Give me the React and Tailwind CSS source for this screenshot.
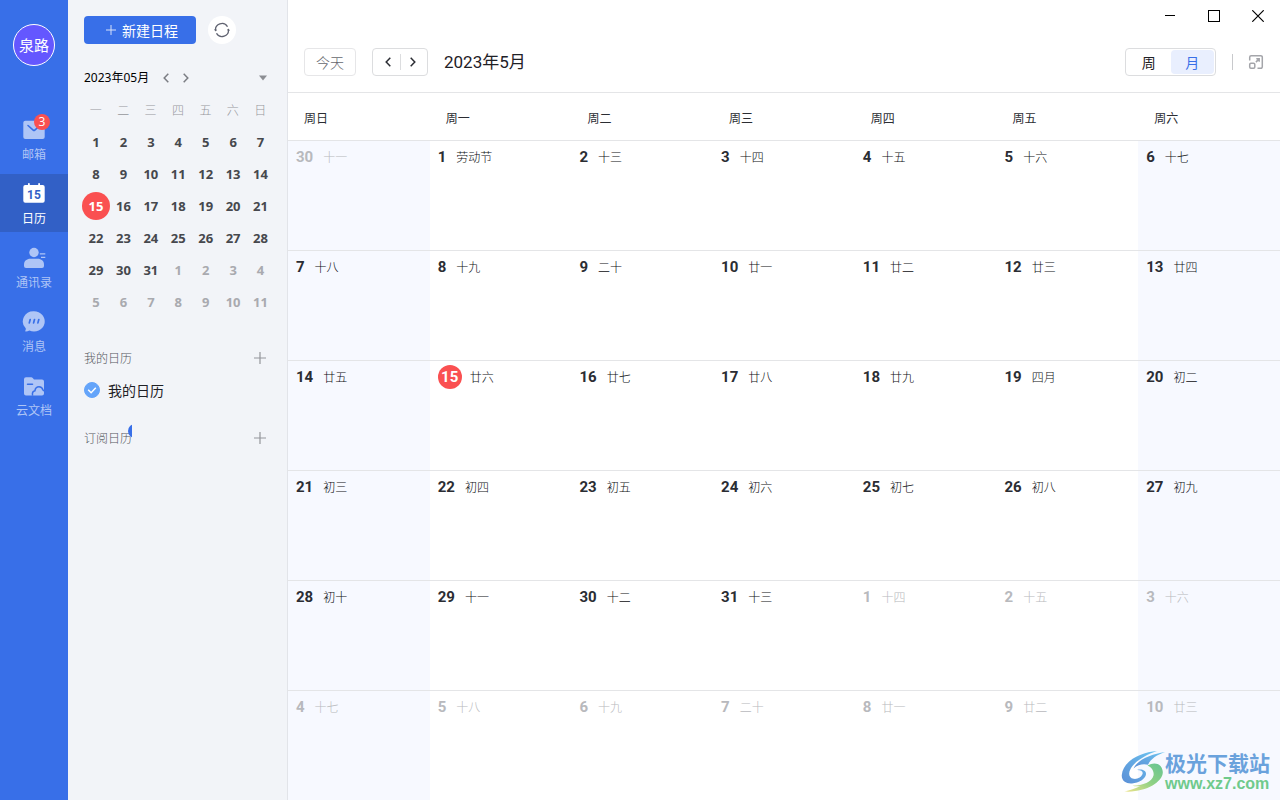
import { useState } from 'react'
import clsx from 'clsx'

const WEEKDAYS = ['周日', '周一', '周二', '周三', '周四', '周五', '周六']
const MINI_WEEKDAYS = ['一', '二', '三', '四', '五', '六', '日']

// [day, lunar label]
const MONTH = [
  [[30, '十一'], [1, '劳动节'], [2, '十三'], [3, '十四'], [4, '十五'], [5, '十六'], [6, '十七']],
  [[7, '十八'], [8, '十九'], [9, '二十'], [10, '廿一'], [11, '廿二'], [12, '廿三'], [13, '廿四']],
  [[14, '廿五'], [15, '廿六'], [16, '廿七'], [17, '廿八'], [18, '廿九'], [19, '四月'], [20, '初二']],
  [[21, '初三'], [22, '初四'], [23, '初五'], [24, '初六'], [25, '初七'], [26, '初八'], [27, '初九']],
  [[28, '初十'], [29, '十一'], [30, '十二'], [31, '十三'], [1, '十四'], [2, '十五'], [3, '十六']],
  [[4, '十七'], [5, '十八'], [6, '十九'], [7, '二十'], [8, '廿一'], [9, '廿二'], [10, '廿三']],
]

const TODAY = 15

// Days of another month: big ones in the first week, small ones in the last two
function isOutside(week, day) {
  return (week === 0 && day > 20) || (week > 3 && day < 15)
}

function MailIcon() {
  return (
    <svg className="size-6" viewBox="0 0 24 24" fill="none">
      <rect x="1.3" y="2.8" width="21.4" height="18.2" rx="2" fill="currentColor" />
      <path d="M6 7.500l5.200 4.600a1.200 1.200 0 0 0 1.600 0L18 7.500" stroke="#386fe8" strokeWidth="1.600" strokeLinecap="round" />
    </svg>
  )
}

function CalendarIcon() {
  return (
    <svg className="size-6" viewBox="0 0 24 24">
      <path
        d="M3.300 3H6V1.800a.9.9 0 0 1 1.800 0V3h8.400V1.800a.9.9 0 0 1 1.800 0V3h2.700a2 2 0 0 1 2 2v13.700a2 2 0 0 1-2 2H3.300a2 2 0 0 1-2-2V5a2 2 0 0 1 2-2z"
        fill="currentColor"
      />
      <text x="12" y="17" textAnchor="middle" fill="#3260c6" className="font-['Roboto'] text-[12px] font-bold">15</text>
    </svg>
  )
}

function ContactsIcon() {
  return (
    <svg className="size-6" viewBox="0 0 24 24" fill="currentColor">
      <circle cx="12" cy="6.500" r="4.700" />
      <path d="M2 20v-1.600C2 15 4.900 12.800 8.200 12.800h7.600C19.100 12.800 22 15 22 18.400V20a2 2 0 0 1-2 2H4a2 2 0 0 1-2-2z" />
      <path d="M17.800 7.800h5.500M19 11.300h4.300" stroke="currentColor" strokeWidth="1.300" />
    </svg>
  )
}

function MessageIcon() {
  return (
    <svg className="size-6" viewBox="0 0 24 24">
      <path
        d="M12 1.200a10.700 10.200 0 1 1-4.600 19.400c-1.200.6-2.500 1-3.500 1-.6 0-.8-.5-.5-1 .4-.7.5-1.500.300-2.300A10.700 10.200 0 0 1 12 1.200z"
        fill="currentColor"
      />
      <path d="M8.200 9.500l-.9 3.400M12.500 9.500l-.9 3.400M16.800 9.500l-.9 3.400" stroke="#386fe8" strokeWidth="1.700" strokeLinecap="round" />
    </svg>
  )
}

function CloudDocIcon() {
  return (
    <svg className="size-6" viewBox="0 0 24 24" fill="none">
      <path
        d="M4 3.300h5.200a2 2 0 0 1 1.500.7l1.300 1.600h8a2 2 0 0 1 2 2v12a2 2 0 0 1-2 2H4a2 2 0 0 1-2-2V5.300a2 2 0 0 1 2-2z"
        fill="currentColor"
      />
      <path d="M5.500 10.200h5" stroke="#386fe8" strokeWidth="1.500" strokeLinecap="round" />
      <path
        d="M10.600 21.600c-.6-2.800.5-4.400 2.300-4.800.4-2.600 2-4 4.100-4 2.300 0 3.500 1.400 4 3.300l1.500.9"
        stroke="#386fe8"
        strokeWidth="1.500"
      />
    </svg>
  )
}

function Chevron({ dir }) {
  return (
    <svg className="h-2.5 w-1.5" viewBox="0 0 6 10" fill="none" stroke="currentColor" strokeWidth="1.500">
      <path d={dir === 'left' ? 'M5.300 .8L1.200 5l4.100 4.200' : 'M.7 .8L4.800 5 .7 9.200'} />
    </svg>
  )
}

function PlusIcon({ className }) {
  return (
    <svg className={className} viewBox="0 0 12 12" stroke="currentColor" strokeWidth="1.200">
      <path d="M6 0v12M0 6h12" />
    </svg>
  )
}

const NAV = [
  { label: '邮箱', Icon: MailIcon, badge: 3 },
  { label: '日历', Icon: CalendarIcon, active: true },
  { label: '通讯录', Icon: ContactsIcon },
  { label: '消息', Icon: MessageIcon },
  { label: '云文档', Icon: CloudDocIcon },
]

function NavBar() {
  return (
    <nav className="w-[68px] shrink-0 bg-[#386fe8] flex flex-col items-center pt-6">
      <button className="size-[42px] rounded-full border border-white bg-[#6457ff] text-white text-[15px] leading-5">
        泉路
      </button>
      <ul className="mt-11 w-full space-y-1.5">
        {NAV.map(({ label, Icon, badge, active }) => (
          <li key={label}>
            <a
              href="#"
              className={clsx(
                'h-[58px] pt-2 flex flex-col items-center gap-1 text-xs',
                active ? 'bg-[#3260c6] text-white' : 'text-[#afc5f6]'
              )}
            >
              <span className="relative">
                <Icon />
                {badge && (
                  <span className="absolute -top-1 -right-1 size-4 rounded-full bg-[#fa5051] font-['Open_Sans',sans-serif] text-white text-xs leading-4 text-center">
                    {badge}
                  </span>
                )}
              </span>
              {label}
            </a>
          </li>
        ))}
      </ul>
    </nav>
  )
}

function MiniCalendar() {
  // Monday first, runs on into the next month
  const days = Array.from({ length: 42 }, (_, i) => ({ day: i < 31 ? i + 1 : i - 30, next: i >= 31 }))
  const weeks = [0, 1, 2, 3, 4, 5].map((w) => days.slice(w * 7, w * 7 + 7))

  return (
    <table className="mt-1 w-48 -mx-0.5 table-fixed text-center">
      <thead>
        <tr className="h-8 text-xs text-[#96979c]">
          {MINI_WEEKDAYS.map((d) => (
            <th key={d} className="p-0 font-light">{d}</th>
          ))}
        </tr>
      </thead>
      <tbody>
        {weeks.map((week, w) => (
          <tr key={w} className="h-8">
            {week.map(({ day, next }) => {
              const today = day === TODAY && !next
              return (
                <td key={day} className="p-0">
                  <button
                    className={clsx(
                      "size-7 rounded-full font-['Open_Sans',sans-serif] text-[13px] font-bold",
                      today ? 'bg-[#fa5051] text-white' : next ? 'text-[#a9aaaf]' : 'text-[#46484d]'
                    )}
                  >
                    {day}
                  </button>
                </td>
              )
            })}
          </tr>
        ))}
      </tbody>
    </table>
  )
}

function Sidebar() {
  const [visible, setVisible] = useState(true)

  return (
    <aside className="w-[220px] shrink-0 bg-[#f2f4f8] border-r border-[#e2e4e9] px-4 pt-4">
      <div className="flex items-center gap-3">
        <button className="w-28 h-7 pl-1 rounded bg-[#386fe8] text-white text-sm flex items-center justify-center gap-1.5">
          <PlusIcon className="size-2.5 opacity-80" />
          新建日程
        </button>
        <button aria-label="刷新" className="size-7 rounded-full bg-white text-[#5f6270] flex items-center justify-center">
          <svg className="size-4" viewBox="0 0 16 16" fill="none" stroke="currentColor" strokeWidth="1.300">
            <path d="M1.600 8.800A6.400 6.400 0 0 1 13.500 4.700M14.400 7.200A6.400 6.400 0 0 1 2.500 11.300" />
            <path d="M.6 7.400l1 1.500 1.300-1.200M15.400 8.600l-1-1.500-1.300 1.200" strokeWidth=".9" />
          </svg>
        </button>
      </div>

      <div className="mt-[22px] h-6 flex items-center text-black">
        <span className="font-['Noto_Sans','Noto_Sans_CJK_SC',sans-serif] text-xs">2023年05月</span>
        <button aria-label="上个月" className="ml-3.5 text-[#7b7d83]"><Chevron dir="left" /></button>
        <button aria-label="下个月" className="ml-3.5 text-[#7b7d83]"><Chevron dir="right" /></button>
        <button aria-label="收起" className="ml-auto mr-1 text-[#8c8e93]">
          <svg className="w-2 h-1.5" viewBox="0 0 8 6" fill="currentColor"><path d="M0 .5h8L4 5.500z" /></svg>
        </button>
      </div>

      <MiniCalendar />

      <section className="mt-6">
        <div className="h-8 flex items-center justify-between pr-[5px] text-xs font-light text-[#55575e]">
          <h2>我的日历</h2>
          <button aria-label="新建日历" className="text-[#94969b]"><PlusIcon className="size-3" /></button>
        </div>
        <label className="h-8 flex items-center gap-2 text-sm text-[#1f2126]">
          <span className="relative size-4">
            <input
              type="checkbox"
              checked={visible}
              onChange={(e) => setVisible(e.target.checked)}
              className="block appearance-none size-4 rounded-full border border-[#64a4fa] checked:bg-[#64a4fa]"
            />
            {visible && (
              <svg className="absolute inset-0 size-4 pointer-events-none" viewBox="0 0 16 16" fill="none" stroke="#fff" strokeWidth="1.500">
                <path d="M4.200 7.800l2.900 2.900 4.700-4.900" />
              </svg>
            )}
          </span>
          我的日历
        </label>
      </section>

      <section className="mt-4">
        <div className="h-8 flex items-center justify-between pr-[5px] text-xs font-light text-[#55575e]">
          <h2 className="relative">
            订阅日历
            <span className="absolute right-0 -top-1.5 w-1 h-3.5 overflow-hidden">
              <span className="block size-3.5 rounded-full bg-[#386fe8]" />
            </span>
          </h2>
          <button aria-label="添加订阅" className="text-[#94969b]"><PlusIcon className="size-3" /></button>
        </div>
      </section>
    </aside>
  )
}

function WindowBar() {
  const btn = 'w-11 h-8 flex items-center justify-center'
  return (
    <div className="flex justify-end text-black">
      <button aria-label="最小化" className={btn}>
        <svg className="size-3" viewBox="0 0 12 12" stroke="currentColor"><path d="M1 5.500h10" /></svg>
      </button>
      <button aria-label="最大化" className={btn}>
        <svg className="size-3" viewBox="0 0 12 12" fill="none" stroke="currentColor"><rect x=".5" y=".5" width="11" height="11" /></svg>
      </button>
      <button aria-label="关闭" className={btn}>
        <svg className="size-3" viewBox="0 0 12 12" stroke="currentColor" strokeWidth="1.200"><path d="M.3 .3l11.400 11.400M11.700 .3L.3 11.700" /></svg>
      </button>
    </div>
  )
}

function Toolbar() {
  const [view, setView] = useState('月')

  return (
    <header className="h-[61px] px-4 border-b border-[#e4e5e7] flex items-center">
      <button className="w-[52px] h-7 rounded border border-[#e6e6e8] text-sm font-light text-[#66686e]">今天</button>
      <div className="ml-4 w-14 h-7 rounded border border-[#dcdddf] flex items-center justify-center text-[#2b2d33]">
        <button aria-label="上个月" className="px-[9px]"><Chevron dir="left" /></button>
        <span className="w-px h-4 bg-[#dcdddf]" />
        <button aria-label="下个月" className="px-[9px]"><Chevron dir="right" /></button>
      </div>
      <h1 className="ml-4 font-['Roboto','Noto_Sans_CJK_SC',sans-serif] text-[17px] leading-6 text-[#1f2126]">2023年5月</h1>

      <div className="ml-auto h-7 w-[91px] p-px rounded border border-[#dcdddf] flex text-sm">
        {['周', '月'].map((v) => (
          <button
            key={v}
            onClick={() => setView(v)}
            className={clsx('flex-1 rounded-sm', view === v ? 'bg-[#e9effe] text-[#386fe8]' : 'text-[#1f2126]')}
          >
            {v}
          </button>
        ))}
      </div>
      <span className="ml-4 w-px h-4 bg-[#c8c9cc]" />
      <button aria-label="小窗口" className="ml-[15px] text-[#a4a5aa]">
        <svg className="size-4" viewBox="0 0 16 16" fill="none" stroke="currentColor" strokeWidth="1.500">
          <path d="M1.700 6.500V3.200a1.500 1.500 0 0 1 1.500-1.500h9.600a1.500 1.500 0 0 1 1.500 1.500v9.600a1.500 1.500 0 0 1-1.500 1.500H9.500" />
          <rect x="1.700" y="9.200" width="5.100" height="5.100" rx="1.200" />
          <path d="M7.900 8.100l3-3M8.300 4.800h2.900v2.900" />
        </svg>
      </button>
    </header>
  )
}

function MonthGrid() {
  return (
    <table className="w-full h-full table-fixed border-separate border-spacing-0 text-xs text-[#2b2d33]">
      <thead>
        <tr className="h-[47px]">
          {WEEKDAYS.map((d) => (
            <th key={d} className="pl-4 pt-0.5 pb-0 text-left font-normal">{d}</th>
          ))}
        </tr>
      </thead>
      <tbody>
        {MONTH.map((week, w) => (
          <tr key={w}>
            {week.map(([day, lunar], i) => {
              const outside = isOutside(w, day)
              const today = w === 2 && day === TODAY
              return (
                <td
                  key={i}
                  className={clsx(
                    'border-t border-[#e4e5e7] align-top pl-2 pt-1',
                    (i === 0 || i === 6) && 'bg-[#f7f9ff]',
                    outside && 'text-[#b8b9bd]'
                  )}
                >
                  <div className={clsx('h-6 flex items-center', today ? 'gap-2' : 'gap-2.5')}>
                    <span
                      className={clsx(
                        "font-['Roboto'] text-[15px] leading-6 font-bold",
                        today && 'size-6 rounded-full bg-[#fa5051] text-white text-center'
                      )}
                    >
                      {day}
                    </span>
                    <span className={clsx('font-light', !outside && 'text-[#0c0d10]')}>{lunar}</span>
                  </div>
                </td>
              )
            })}
          </tr>
        ))}
      </tbody>
    </table>
  )
}

function SiteMark() {
  return (
    <div className="absolute right-2.5 bottom-1.5 flex items-center">
      <svg className="w-11 h-11" viewBox="0 0 44 44">
        <defs>
          <linearGradient id="markBlue" x1="0" y1="1" x2="1" y2="0">
            <stop offset="0" stopColor="#5b8fd6" />
            <stop offset="1" stopColor="#6cc4f0" />
          </linearGradient>
          <linearGradient id="markGreen" x1="0" y1="1" x2="1" y2="0">
            <stop offset="0" stopColor="#efe48a" />
            <stop offset=".5" stopColor="#8fd184" />
            <stop offset="1" stopColor="#66c492" />
          </linearGradient>
        </defs>
        <path
          d="M36 1C20 2 2 11 .8 25c-.5 6 4.500 9 10.200 8.500 7-.6 13.500-4.500 14-9.200.3-3.800-4-5.600-9-4.300 3.700-.1 6.200 1.300 5.600 3.800-.9 3.500-5.200 5.500-9 5-4.600-.6-5.600-5-3.100-9.800C13 12 24 5 36 1z"
          fill="url(#markBlue)"
        />
        <path d="M44 2C31 4 17 9 12.500 18.500c4.500-4.300 10.500-5 14.500-3.700C29 10 35 5 44 2z" fill="url(#markBlue)" />
        <path
          d="M26.500 15.500C34 11 41.500 14 41.800 22 42.200 32 24 43 3.500 41.500c5-1 11-3 16-5.500-2.500.3-5.500.3-8-.3C22 35.500 31 32 32.500 25.500c.8-4-1.500-8-6-10z"
          fill="url(#markGreen)"
        />
      </svg>
      <div className="font-bold">
        <div className="text-[21px] leading-6 text-[#6aa2dc]">极光下载站</div>
        <div className="font-['Liberation_Sans',sans-serif] text-base leading-5 text-[#6fca8c]">www.xz7.com</div>
      </div>
    </div>
  )
}

export default function App() {
  return (
    <div className="relative h-screen flex overflow-hidden bg-white font-['Noto_Sans_CJK_SC',sans-serif]">
      <NavBar />
      <Sidebar />
      <main className="flex-1 min-w-0 flex flex-col">
        <WindowBar />
        <Toolbar />
        <div className="flex-1 min-h-0">
          <MonthGrid />
        </div>
      </main>
      <SiteMark />
    </div>
  )
}
